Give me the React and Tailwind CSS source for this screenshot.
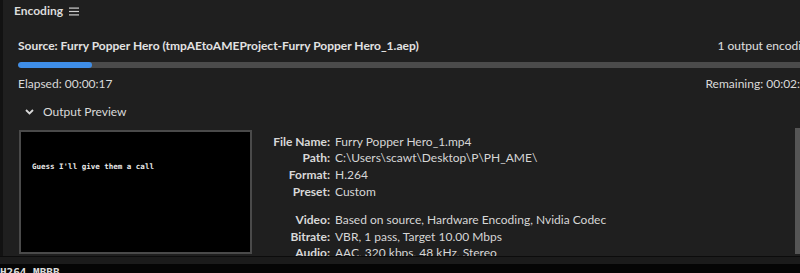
export default function App() {
  const rows = [
    ["File Name:", "Furry Popper Hero_1.mp4"],
    ["Path:", "C:\\Users\\scawt\\Desktop\\P\\PH_AME\\"],
    ["Format:", "H.264"],
    ["Preset:", "Custom"],
  ];
  const rows2 = [
    ["Video:", "Based on source, Hardware Encoding, Nvidia Codec"],
    ["Bitrate:", "VBR, 1 pass, Target 10.00 Mbps"],
    ["Audio:", "AAC, 320 kbps, 48 kHz, Stereo"],
  ];
  return (
    <div className="w-[800px] h-[273px] overflow-hidden bg-[#1f1f1f] text-[#d6d6d6] flex flex-col" style={{ fontFamily: "Lato, 'Open Sans', sans-serif" }}>
      <div className="flex flex-1 min-h-0">
        <div className="w-[3px] bg-[#121212]" />
        <div className="flex-1 min-w-0 flex flex-col overflow-hidden">
          <div className="h-[24px] flex items-center pl-[11px] gap-[6px] text-[12px] font-bold text-[#dcdcdc]">
            <span>Encoding</span>
            <svg width="10" height="9" viewBox="0 0 10 9" className="mt-[1px]">
              <rect x="0" y="0.5" width="10" height="1.2" fill="#cfcfcf" />
              <rect x="0" y="3.9" width="10" height="1.2" fill="#cfcfcf" />
              <rect x="0" y="7.3" width="10" height="1.2" fill="#cfcfcf" />
            </svg>
          </div>
          <div className="pl-[15px] mt-[14px] flex justify-between whitespace-nowrap text-[12px]">
            <span className="font-bold text-[#e2e2e2]">Source: Furry Popper Hero (tmpAEtoAMEProject-Furry Popper Hero_1.aep)</span>
            <span className="text-[#e0e0e0] mr-[-14px]">1 output encoding</span>
          </div>
          <div className="ml-[15px] mt-[7px] h-[6px] bg-[#4b4b4b] rounded-l-full overflow-hidden">
            <div className="w-[74px] h-full bg-[#3f8ee8] rounded-full" />
          </div>
          <div className="pl-[15px] mt-[7px] flex justify-between whitespace-nowrap text-[12px] text-[#dadada]">
            <span>Elapsed: 00:00:17</span>
            <span className="mr-[-14px]">Remaining: 00:02:52</span>
          </div>
          <div className="pl-[22px] mt-[10px] flex items-center gap-[9px] text-[12px] text-[#dadada]">
            <svg width="9" height="6" viewBox="0 0 9 6"><path d="M1 1 L4.5 4.5 L8 1" stroke="#d8d8d8" strokeWidth="1.8" fill="none" /></svg>
            <span>Output Preview</span>
          </div>
          <div className="flex mt-[9px] min-h-0">
            <div className="ml-[16px] w-[233px] h-[124px] shrink-0 border-2 border-[#4a4a4a] bg-black relative">
              <div className="pl-[11px] pt-[29px] text-[7.5px] font-bold text-[#eaeaea] whitespace-nowrap" style={{ fontFamily: "'DejaVu Sans Mono', monospace" }}>
                Guess I'll give them a call
              </div>
            </div>
            <div className="ml-[13px] flex-1 text-[12px] leading-[16.8px] whitespace-nowrap mt-[4px]">
              {rows.map(([k, v]) => (
                <div key={k} className="flex">
                  <span className="w-[65px] text-right font-bold text-[#d8d8d8]">{k}</span>
                  <span className="ml-[5px] text-[#d6d6d6]">{v}</span>
                </div>
              ))}
              <div className="h-[11px]" />
              {rows2.map(([k, v]) => (
                <div key={k} className="flex">
                  <span className="w-[65px] text-right font-bold text-[#d8d8d8]">{k}</span>
                  <span className="ml-[5px] text-[#d6d6d6]">{v}</span>
                </div>
              ))}
            </div>
            <div className="w-[5px] h-[126px] bg-[#555] mt-[-2px] shrink-0" />
          </div>
        </div>
      </div>
      <div className="h-[17px] shrink-0 flex flex-col">
        <div className="h-[1px] bg-[#0c0c0c]" />
        <div className="h-[7px] bg-[#1b1b1b]" />
        <div className="flex-1 bg-[#050505] overflow-hidden relative">
          <span className="absolute left-0 top-[3px] text-[11px] font-bold text-[#dcdcdc] leading-none" style={{ fontFamily: "'DejaVu Sans Mono', monospace" }}>H264 MBBB</span>
        </div>
      </div>
    </div>
  );
}
